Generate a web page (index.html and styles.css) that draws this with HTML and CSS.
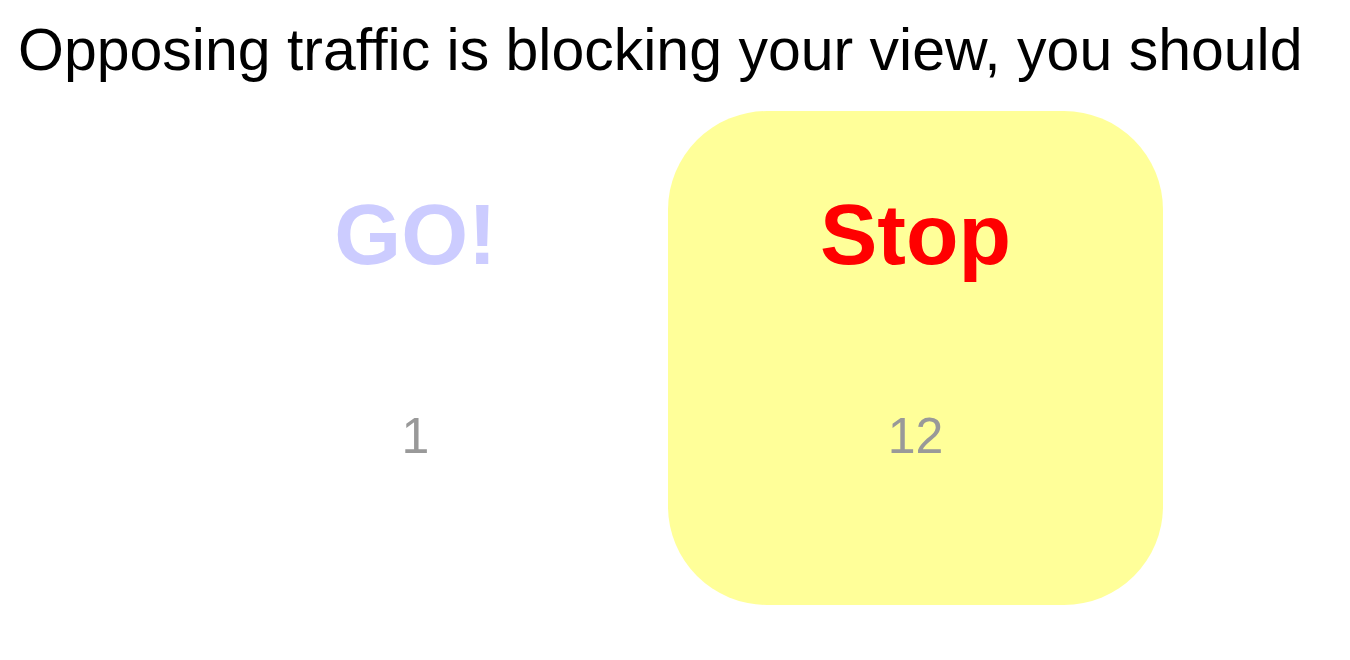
FILE: index.html
```html
<!DOCTYPE html>
<html>
<head>
<meta charset="utf-8">
<link rel="stylesheet" href="styles.css">
</head>
<body>
<h1 class="question">Opposing traffic is blocking your view, you should</h1>
<div class="options">
  <div class="option">
    <div class="label go">GO!</div>
    <div class="count">1</div>
  </div>
  <div class="option selected">
    <div class="label stop">Stop</div>
    <div class="count">12</div>
  </div>
</div>
</body>
</html>
```
FILE: styles.css
```css
html, body {
  margin: 0;
  padding: 0;
  background: #ffffff;
  font-family: "Liberation Sans", Arial, sans-serif;
}
body {
  padding: 8px;
}
.question {
  margin: 13px 0 0 10px;
  font-size: 59px;
  line-height: 1;
  font-weight: normal;
  color: #000000;
  white-space: nowrap;
}
.options {
  display: flex;
  gap: 5px;
  padding-left: 160px;
  margin-top: 31px;
}
.option {
  width: 495px;
  height: 494px;
  border-radius: 20%;
  box-sizing: border-box;
  padding-top: 80px;
  display: flex;
  flex-direction: column;
  align-items: center;
}
.option.selected {
  background: #ffff99;
}
.label {
  font-size: 86px;
  font-weight: bold;
  line-height: 1;
}
.go { color: #ccccff; }
.stop { color: #ff0000; }
.count {
  margin-top: 134px;
  font-size: 50px;
  line-height: 1;
  color: #999999;
}
```
